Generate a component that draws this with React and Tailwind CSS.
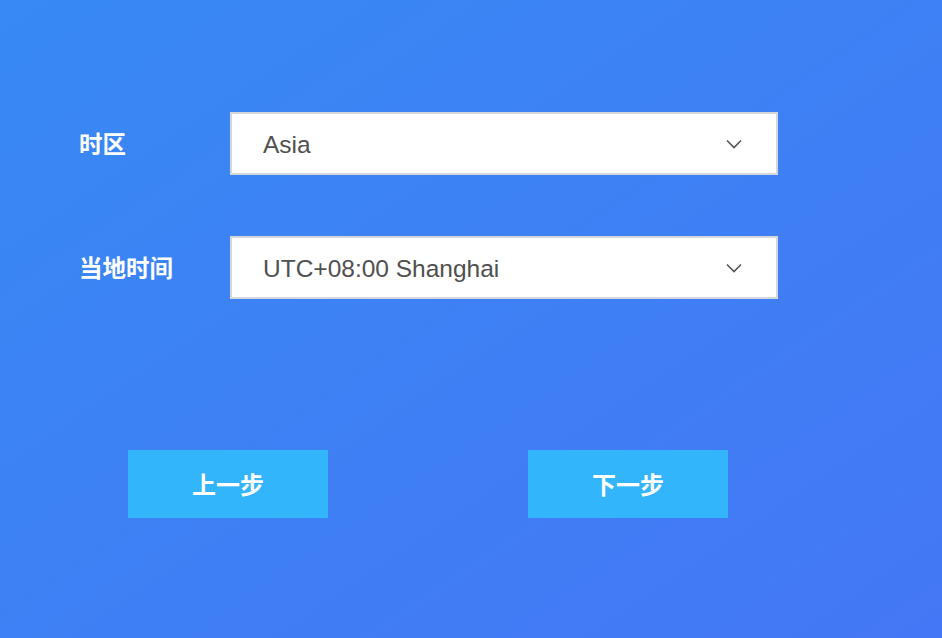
import React, { useState } from 'react';

const Chevron = () => (
  <svg width="16" height="10" viewBox="0 0 16 10" fill="none" className="shrink-0">
    <path d="M1 1.5L8 8.5L15 1.5" stroke="#555555" strokeWidth="1.6" />
  </svg>
);

const SelectBox = ({ value }) => (
  <div className="w-[548px] h-[63px] bg-white border-2 border-[#d3d6db] flex items-center justify-between pl-[31px] pr-[34px] cursor-pointer">
    <span className="pt-[3px] text-[24.5px] text-[#505050] font-['Liberation_Sans',sans-serif]">{value}</span>
    <Chevron />
  </div>
);

const FieldRow = ({ label, value }) => (
  <div className="flex items-center">
    <div className="w-[151px] text-white text-[23.5px] font-bold font-['Noto_Sans_CJK_SC',sans-serif]">{label}</div>
    <SelectBox value={value} />
  </div>
);

const App = () => {
  const [zone] = useState('Asia');
  const [local] = useState('UTC+08:00 Shanghai');

  return (
    <div className="w-[942px] h-[638px] overflow-hidden bg-linear-to-br from-[#3789f4] to-[#4477f5] font-['Noto_Sans_CJK_SC',sans-serif]">
      <div className="pt-[112px] pl-[79px] flex flex-col gap-[61px]">
        <FieldRow label="时区" value={zone} />
        <FieldRow label="当地时间" value={local} />
      </div>
      <div className="mt-[151px] pl-[128px] flex gap-[200px]">
        <button className="w-[200px] h-[68px] bg-[#33b5fc] text-white text-[24px] font-bold">上一步</button>
        <button className="w-[200px] h-[68px] bg-[#33b5fc] text-white text-[24px] font-bold">下一步</button>
      </div>
    </div>
  );
};

export default App;
